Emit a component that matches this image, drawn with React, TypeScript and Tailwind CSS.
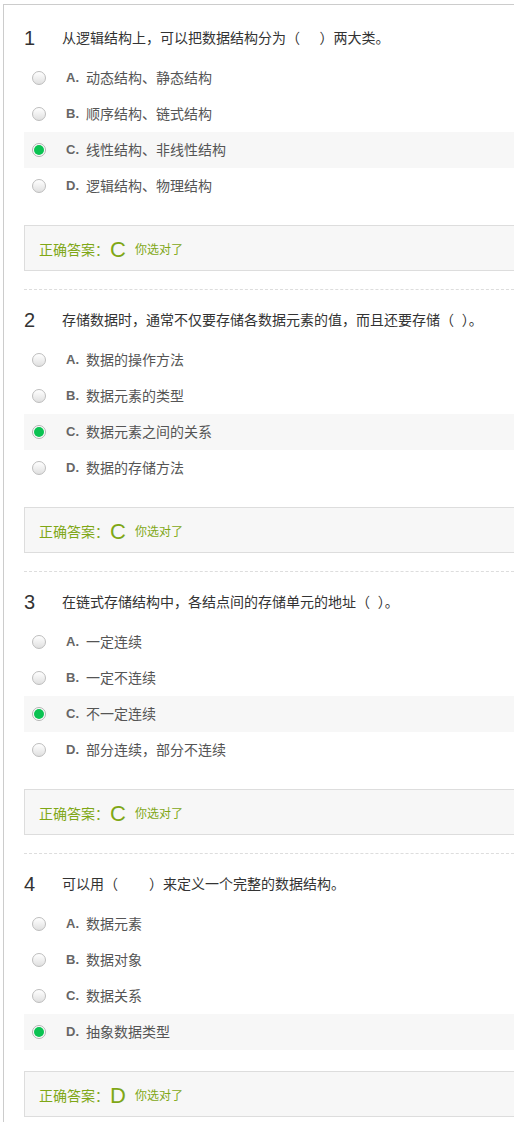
import React from "react";

type Question = {
  no: number;
  title: string;
  options: string[];
  checked: number;
  answer: string;
};

const questions: Question[] = [
  {
    no: 1,
    title: "从逻辑结构上，可以把数据结构分为（\u00a0\u00a0\u00a0\u00a0\u00a0）两大类。",
    options: ["动态结构、静态结构", "顺序结构、链式结构", "线性结构、非线性结构", "逻辑结构、物理结构"],
    checked: 2,
    answer: "C",
  },
  {
    no: 2,
    title: "存储数据时，通常不仅要存储各数据元素的值，而且还要存储（\u00a0\u00a0）。",
    options: ["数据的操作方法", "数据元素的类型", "数据元素之间的关系", "数据的存储方法"],
    checked: 2,
    answer: "C",
  },
  {
    no: 3,
    title: "在链式存储结构中，各结点间的存储单元的地址（\u00a0\u00a0）。",
    options: ["一定连续", "一定不连续", "不一定连续", "部分连续，部分不连续"],
    checked: 2,
    answer: "C",
  },
  {
    no: 4,
    title: "可以用（\u00a0\u00a0\u00a0\u00a0\u00a0\u00a0\u00a0\u00a0）来定义一个完整的数据结构。",
    options: ["数据元素", "数据对象", "数据关系", "抽象数据类型"],
    checked: 3,
    answer: "D",
  },
];

const letters = ["A", "B", "C", "D"];

const Radio = ({ on }: { on: boolean }) =>
  on ? (
    <span className="w-[14px] h-[14px] rounded-full border border-[#b3b3b3] bg-white p-[1px] flex">
      <span className="flex-1 rounded-full bg-[#0bc252]" />
    </span>
  ) : (
    <span className="w-[14px] h-[14px] rounded-full border border-[#bdbdbd] bg-linear-to-b from-white to-[#e0e0e0]" />
  );

const App = () => {
  return (
    <div className="min-h-[1122px] bg-white font-['Liberation_Sans','Noto_Sans_CJK_SC',sans-serif]">
      <div className="ml-[3px] mt-[4px] min-h-[1118px] border-l border-t border-[#cccccc] pl-[20px]">
        {questions.map((q, i) => (
          <div
            key={q.no}
            className={i === 0 ? "pt-[23px]" : "border-t border-dashed border-[#dddddd] pt-[20px]"}
          >
            <div className="flex items-center h-[20px]">
              <span className="w-[38px] text-[20px] leading-[20px] text-[#333]">{q.no}</span>
              <span className="text-[14px] text-[#333] whitespace-nowrap">{q.title}</span>
            </div>

            <div className="mt-[12px]">
              {q.options.map((opt, j) => (
                <div
                  key={j}
                  className={
                    "flex items-center h-[36px] pl-[8px] " + (j === q.checked ? "bg-[#f7f7f7]" : "")
                  }
                >
                  <Radio on={j === q.checked} />
                  <span className="ml-[20px] w-[20px] text-[13px] font-bold text-[#666]">{letters[j]}.</span>
                  <span className="text-[14px] text-[#555]">{opt}</span>
                </div>
              ))}
            </div>

            <div className="mt-[21px] mb-[18px] h-[46px] flex items-center pl-[14px] pt-[4px] border border-r-0 border-[#dddddd] bg-[#f7f7f7] text-[#7fa716]">
              <span className="text-[14px]">正确答案：</span>
              <span className="text-[22px] leading-[22px] ml-[1px]">{q.answer}</span>
              <span className="text-[12px] ml-[9px]">你选对了</span>
            </div>
          </div>
        ))}
      </div>
    </div>
  );
};

export default App;
